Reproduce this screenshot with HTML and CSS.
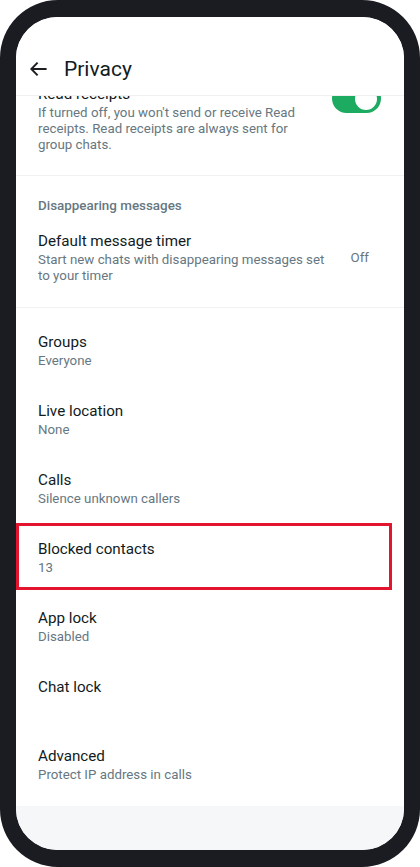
FILE: index.html
```html
<!DOCTYPE html>
<html lang="en">
<head>
<meta charset="utf-8">
<title>Privacy</title>
<link rel="stylesheet" href="styles.css">
</head>
<body>
<div class="phone">
  <header class="appbar">
    <svg class="back" width="18" height="18" viewBox="0 0 18 18" aria-hidden="true">
      <path d="M1.4 9H16.6M7.6 2.6L1.3 9l6.3 6.4" fill="none" stroke="#1c1e21" stroke-width="2"/>
    </svg>
    <h1 class="title-bar">Privacy</h1>
  </header>
  <main class="content">
    <div class="list">
      <section class="section sec-receipts">
        <div class="row row-toggle">
          <div class="text">
            <div class="title">Read receipts</div>
            <div class="sub">If turned off, you won't send or receive Read receipts. Read receipts are always sent for group chats.</div>
          </div>
          <div class="switch"><span class="knob"></span></div>
        </div>
      </section>
      <section class="section sec-disappear">
        <div class="sec-head">Disappearing messages</div>
        <div class="row row-value">
          <div class="text">
            <div class="title">Default message timer</div>
            <div class="sub">Start new chats with disappearing messages set to your timer</div>
          </div>
          <span class="value">Off</span>
        </div>
      </section>
      <section class="section sec-main">
        <div class="row"><div class="text"><div class="title">Groups</div><div class="sub">Everyone</div></div></div>
        <div class="row"><div class="text"><div class="title">Live location</div><div class="sub">None</div></div></div>
        <div class="row"><div class="text"><div class="title">Calls</div><div class="sub">Silence unknown callers</div></div></div>
        <div class="row highlight"><div class="text"><div class="title">Blocked contacts</div><div class="sub">13</div></div></div>
        <div class="row"><div class="text"><div class="title">App lock</div><div class="sub">Disabled</div></div></div>
        <div class="row"><div class="text"><div class="title">Chat lock</div></div></div>
        <div class="row"><div class="text"><div class="title">Advanced</div><div class="sub">Protect IP address in calls</div></div></div>
      </section>
    </div>
  </main>
</div>
</body>
</html>
```

FILE: styles.css
```css
html, body {
  margin: 0;
  padding: 0;
  background: #ffffff;
}

body {
  font-family: Roboto, "Noto Sans", "Liberation Sans", sans-serif;
}

.phone {
  box-sizing: border-box;
  width: 420px;
  height: 867px;
  border: 16px solid #1b1c22;
  border-top-width: 17px;
  border-bottom-width: 17px;
  border-radius: 58px;
  overflow: hidden;
  background: #ffffff;
  display: flex;
  flex-direction: column;
}

.appbar {
  flex: none;
  box-sizing: border-box;
  height: 79px;
  padding: 26px 0 0 14px;
  display: flex;
  align-items: center;
  border-bottom: 1px solid #eef0f2;
  background: #ffffff;
}

.back {
  flex: none;
  display: block;
}

.title-bar {
  margin: 0 0 0 16px;
  font-size: 21px;
  font-weight: 400;
  color: #111b21;
  line-height: normal;
}

.content {
  flex: 1;
  overflow: hidden;
  background: #f6f7f9;
}

.list {
  margin-top: -28px;
  background: #ffffff;
}

.section {
  background: #ffffff;
}

.sec-receipts {
  padding-bottom: 6px;
  border-bottom: 1px solid #eff1f3;
}

.sec-disappear {
  padding-bottom: 7px;
  border-bottom: 1px solid #eff1f3;
}

.sec-main {
  padding: 8px 0 7px;
}

.sec-head {
  padding: 20px 22px 0;
  font-size: 13.4px;
  line-height: 19px;
  font-weight: 500;
  color: #667781;
}

.row {
  display: flex;
  align-items: flex-start;
  padding: 15px 23px 16px 22px;
}

.text {
  flex: 1;
  min-width: 0;
  min-height: 38px;
}

.title {
  font-size: 15.2px;
  line-height: 22px;
  color: #111b21;
}

.sub {
  font-size: 13.3px;
  line-height: 16px;
  color: #667781;
}

.row-toggle {
  gap: 16px;
}

.switch {
  flex: none;
  box-sizing: border-box;
  width: 49px;
  height: 29px;
  margin-top: 1px;
  border-radius: 15px;
  background: #1daa61;
  display: flex;
  align-items: center;
  justify-content: flex-end;
  padding-right: 4px;
}

.knob {
  width: 22px;
  height: 22px;
  border-radius: 50%;
  background: #ffffff;
}

.row-value {
  align-items: center;
  gap: 14px;
}

.value {
  flex: none;
  margin-right: 12px;
  font-size: 13.3px;
  color: #667781;
}

.highlight {
  position: relative;
}

.highlight::after {
  content: "";
  position: absolute;
  left: 0;
  top: 0;
  width: 376px;
  height: 67px;
  box-sizing: border-box;
  border: 3px solid #e3142d;
}
```
